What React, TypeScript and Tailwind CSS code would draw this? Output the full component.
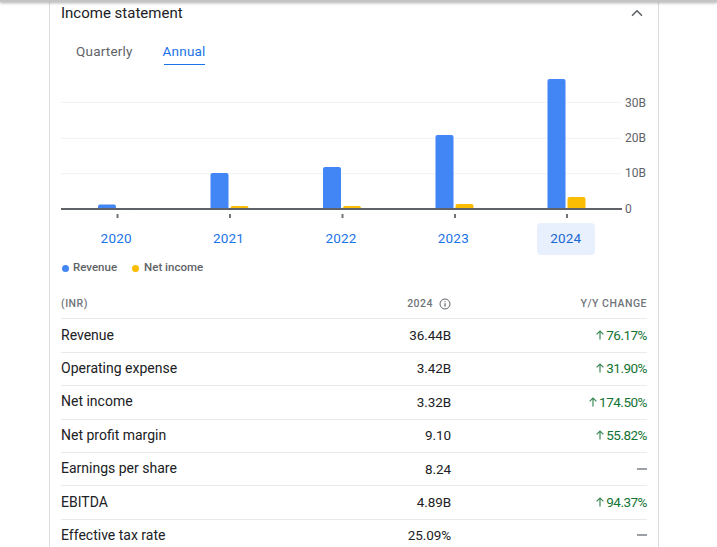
import { ChevronUp } from 'lucide-react';

const rows = [
  { label: 'Revenue', value: '36.44B', change: '76.17%' },
  { label: 'Operating expense', value: '3.42B', change: '31.90%' },
  { label: 'Net income', value: '3.32B', change: '174.50%' },
  { label: 'Net profit margin', value: '9.10', change: '55.82%' },
  { label: 'Earnings per share', value: '8.24', change: null },
  { label: 'EBITDA', value: '4.89B', change: '94.37%' },
  { label: 'Effective tax rate', value: '25.09%', change: null },
];

// x offsets are relative to the chart svg, which starts at the card's content edge (x=61)
const bars = [
  { x: 37, rev: 204.5, net: 208.5 },
  { x: 149.5, rev: 173, net: 206 },
  { x: 262, rev: 167, net: 206 },
  { x: 374.5, rev: 135, net: 204 },
  { x: 486.5, rev: 79, net: 197 },
];

const years = ['2020', '2021', '2022', '2023', '2024'];

function Chart() {
  return (
    <svg width="597" height="150" viewBox="0 70 597 150" className="block">
      {[102, 138, 173].map((y) => (
        <line key={y} x1="0" x2="560" y1={y + 0.5} y2={y + 0.5} stroke="#f1f3f4" />
      ))}
      {bars.map((b) => (
        <g key={b.x}>
          <path
            d={`M${b.x} 208.5V${b.rev + 2}a2 2 0 0 1 2-2h14a2 2 0 0 1 2 2V208.5z`}
            fill="#4285f4"
          />
          <path
            d={`M${b.x + 20} 208.5V${b.net + 2}a2 2 0 0 1 2-2h14a2 2 0 0 1 2 2V208.5z`}
            fill="#fbbc04"
          />
          <rect x={b.x + 18.5} y="214" width="2" height="4" fill="#70757a" />
        </g>
      ))}
      <rect x="0" y="208" width="561" height="2" fill="#5f6368" />
      <g fontFamily="Roboto, sans-serif" fontSize="12" fill="#5f6368">
        <text x="564" y="107">30B</text>
        <text x="564" y="142">20B</text>
        <text x="564" y="177">10B</text>
        <text x="564" y="213">0</text>
      </g>
    </svg>
  );
}

export default function App() {
  return (
    <div className="relative h-[547px] w-[717px] overflow-hidden bg-white font-['Roboto',sans-serif]">
      {/* shadow of the sticky bar above */}
      <div className="absolute inset-x-0 top-0 h-[2px] bg-[#c4c4c4] shadow-[0_1px_3px_rgba(60,64,67,0.5)]" />

      <div className="ml-[49px] h-full w-[610px] border-x border-[#dadce0] pl-[11px] pr-[11px]">
        <div className="flex h-[25px] items-center justify-between">
          <h2 className="text-[15px] leading-[24px] text-[#202124]">Income statement</h2>
          <ChevronUp className="mr-[1px] h-[18px] w-[18px] text-[#5f6368]" strokeWidth={2.2} />
        </div>

        <div className="mt-[14px] flex h-[26px] pl-[15px] text-[13.5px] tracking-[0.2px]">
          <span className="pt-[2px] leading-[20px] text-[#5f6368]">Quarterly</span>
          <span className="relative ml-[30px] pt-[2px] leading-[20px] text-[#1a73e8]">
            Annual
            <span className="absolute bottom-0 left-[1.5px] right-[1px] h-[1px] bg-[#1a73e8]" />
          </span>
        </div>

        <div className="mt-[5px]">
          <Chart />
        </div>

        <div className="-ml-[1px] mt-[3px] flex h-[32px] text-[13.5px] tracking-[0.2px] text-[#1a73e8]">
          {years.map((y) => (
            <div key={y} className="flex w-[112.4px] justify-center">
              <div className={y === '2024' ? 'flex h-[32px] w-[58px] items-center justify-center rounded-[4px] bg-[#e8f0fe] pb-[1px] text-[#1967d2]' : 'flex w-[58px] items-center justify-center pb-[1px]'}>
                {y}
              </div>
            </div>
          ))}
        </div>

        <div className="mt-[5px] flex h-[16px] items-center text-[11.5px] font-medium text-[#5f6368]">
          <span className="ml-[0.5px] h-[7px] w-[7px] rounded-full bg-[#4285f4]" />
          <span className="ml-[4.5px]">Revenue</span>
          <span className="ml-[14.5px] h-[7px] w-[7px] rounded-full bg-[#fbbc04]" />
          <span className="ml-[5.5px]">Net income</span>
        </div>

        <div className="mt-[13px] w-[586px]">
          <div className="flex h-[30.4px] items-center border-b border-[#e8eaed] text-[10.5px] font-medium tracking-[0.5px] text-[#70757a]">
            <span className="w-[200px]">(INR)</span>
            <span className="flex w-[190px] items-center justify-end gap-[6px]">
              2024
              <svg width="12" height="12" viewBox="0 0 12 12" fill="none" stroke="#5f6368">
                <circle cx="6" cy="6" r="5" />
                <path d="M6 5.2v3.4M6 3.2v1" strokeWidth="1.2" />
              </svg>
            </span>
            <span className="flex-1 text-right">Y/Y CHANGE</span>
          </div>
          {rows.map((r) => (
            <div key={r.label} className="flex h-[33.4px] items-center border-b border-[#e8eaed] pb-[1px] text-[14px] text-[#202124]">
              <span className="w-[200px]">{r.label}</span>
              <span className="w-[190px] text-right text-[13.5px] tracking-[-0.1px]">{r.value}</span>
              <span className="flex flex-1 items-center justify-end text-[13.5px] tracking-[-0.5px] text-[#137333]">
                {r.change ? (
                  <>
                    <svg width="10" height="10" viewBox="0 0 10 10" fill="none" stroke="#3c8a58" strokeWidth="1.2" className="mr-[1.5px]">
                      <path d="M5 9.5V1.2M1.6 4.4 5 1l3.4 3.4" />
                    </svg>
                    {r.change}
                  </>
                ) : (
                  <span className="h-[2px] w-[10px] bg-[#9aa0a6]" />
                )}
              </span>
            </div>
          ))}
        </div>
      </div>
    </div>
  );
}
